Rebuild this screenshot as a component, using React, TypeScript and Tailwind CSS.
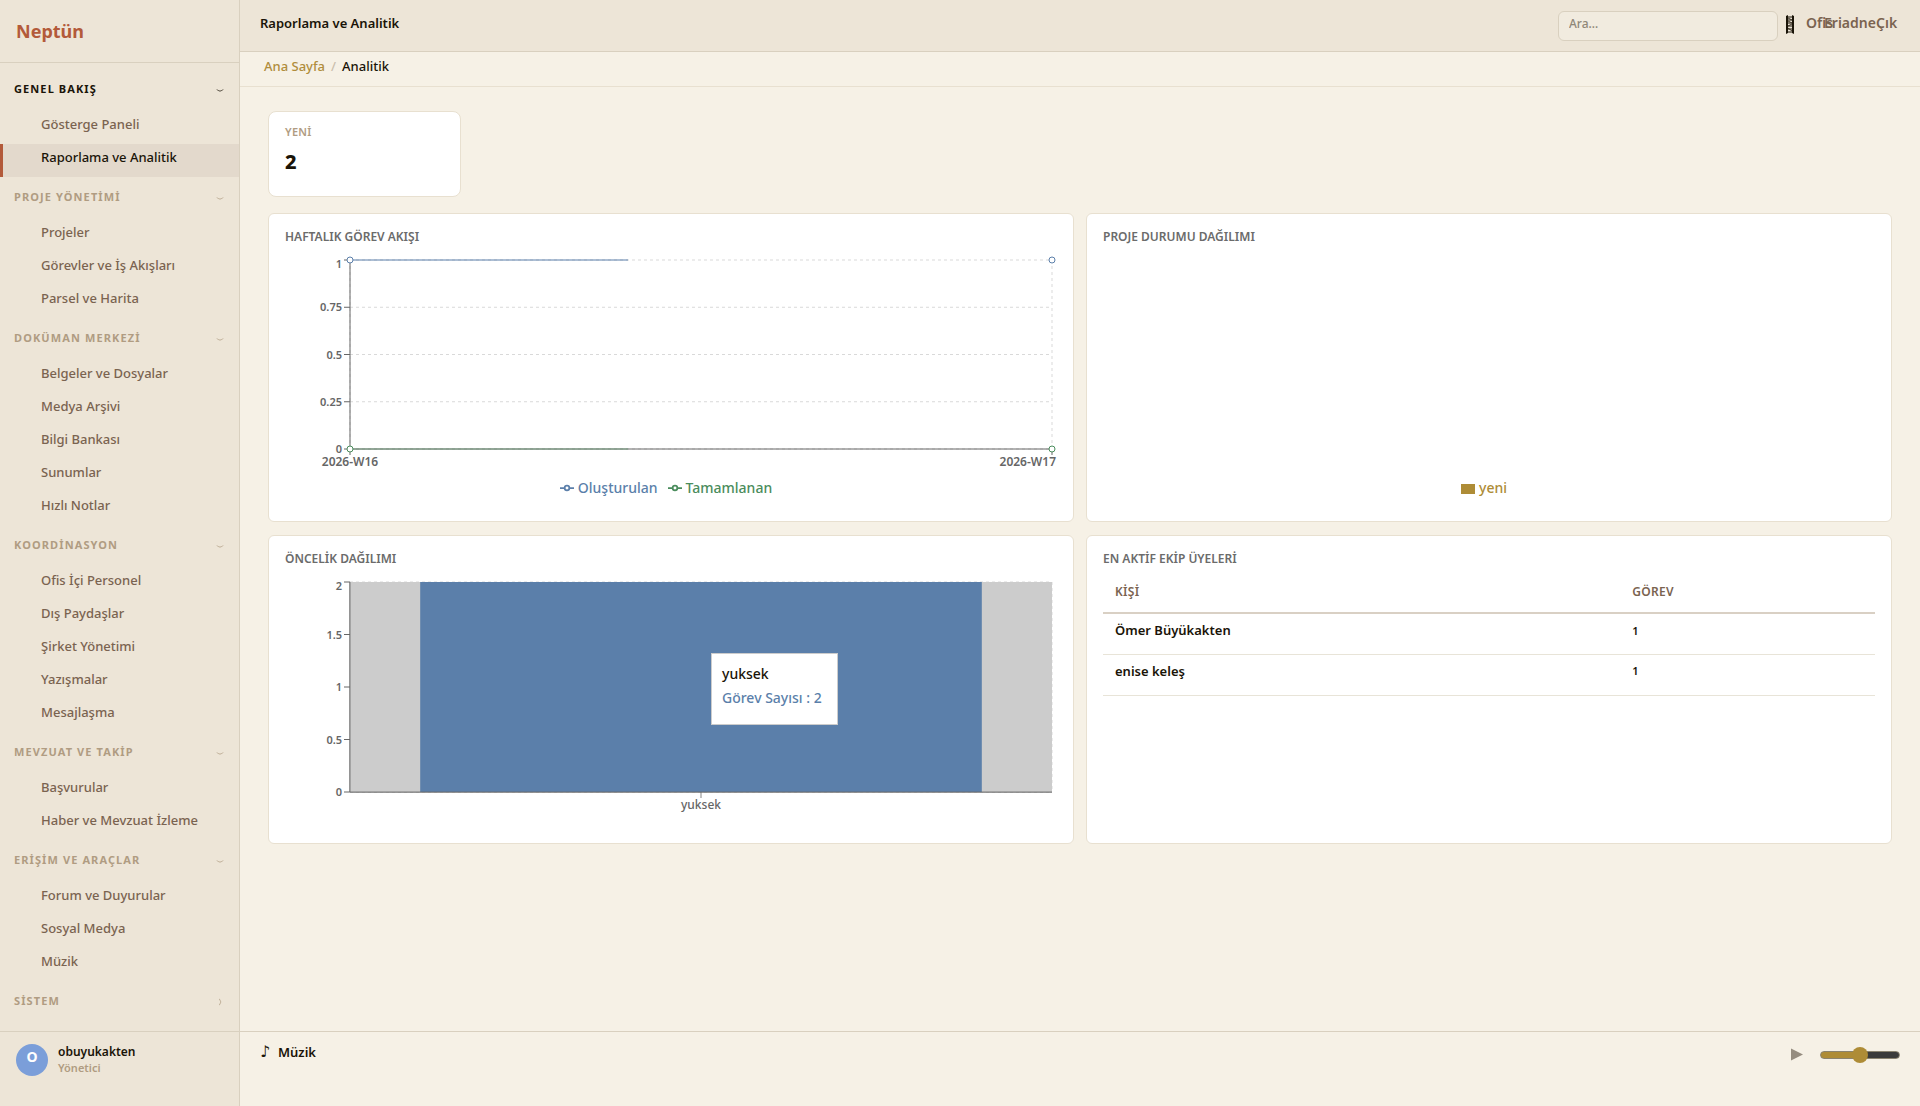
import { useLayoutEffect, useRef, useState } from 'react';
import type { ReactNode } from 'react';
import { clsx } from 'clsx';

type TGroup = { title: string; open: boolean; active?: boolean; items: string[] };

const GROUPS: TGroup[] = [
  { title: 'GENEL BAKIŞ', open: true, active: true, items: ['Gösterge Paneli', 'Raporlama ve Analitik'] },
  { title: 'PROJE YÖNETİMİ', open: true, items: ['Projeler', 'Görevler ve İş Akışları', 'Parsel ve Harita'] },
  { title: 'DOKÜMAN MERKEZİ', open: true, items: ['Belgeler ve Dosyalar', 'Medya Arşivi', 'Bilgi Bankası', 'Sunumlar', 'Hızlı Notlar'] },
  { title: 'KOORDİNASYON', open: true, items: ['Ofis İçi Personel', 'Dış Paydaşlar', 'Şirket Yönetimi', 'Yazışmalar', 'Mesajlaşma'] },
  { title: 'MEVZUAT VE TAKİP', open: true, items: ['Başvurular', 'Haber ve Mevzuat İzleme'] },
  { title: 'ERİŞİM VE ARAÇLAR', open: true, items: ['Forum ve Duyurular', 'Sosyal Medya', 'Müzik'] },
  { title: 'SİSTEM', open: false, items: [] },
];

const ACTIVE = 'Raporlama ve Analitik';

const MEMBERS = [
  { name: 'Ömer Büyükakten', count: 1 },
  { name: 'enise keleş', count: 1 },
];

// plot area inside a 250px high chart
const LEFT = 65;
const TOP = 5;

const useWidth = () => {
  const ref = useRef<HTMLDivElement>(null);
  const [width, setWidth] = useState(0);

  useLayoutEffect(() => {
    const el = ref.current;
    if (!el) return;
    setWidth(el.clientWidth);
    const ro = new ResizeObserver(() => setWidth(el.clientWidth));
    ro.observe(el);
    return () => ro.disconnect();
  }, []);

  return { ref, width };
};

const Chevron = ({ open }: { open: boolean }) => (
  <svg width="8" height="10" viewBox="0 0 8 10" fill="none" stroke="currentColor" className="opacity-80" aria-hidden="true">
    {open ? <path d="M1 5.5C1.6 6.9 3 6.2 4 7.3C5 6.2 6.4 6.9 7 5.5" /> : <path d="M3 3C4.6 3.6 3.8 5 5 6C3.8 7 4.6 8.4 3 9" />}
  </svg>
);

const Sidebar = () => (
  <aside className="flex w-60 shrink-0 flex-col border-r border-[#d9d0bf] bg-[#ede5d7]">
    <div className="flex h-[63px] items-center border-b border-[#d9d0bf] px-4 text-lg font-bold text-[#b35a3a]">Neptün</div>

    <nav className="flex-1 pt-1.5">
      {GROUPS.map((group) => (
        <div key={group.title}>
          <button
            type="button"
            aria-expanded={group.open}
            className={clsx(
              'flex h-[42px] w-full items-center justify-between pr-[15px] pb-0.5 pl-3.5 text-[11px] font-bold tracking-widest',
              group.active ? 'text-[#1a1408]' : 'text-[#b09c82]',
            )}
          >
            <span>{group.title}</span>
            <Chevron open={group.open} />
          </button>
          {group.items.map((item) => (
            <a
              key={item}
              href="#"
              className={clsx(
                'flex h-[33px] items-center border-l-3 pb-1.5 pl-[38px] text-[13px] font-medium',
                item === ACTIVE ? 'border-[#b35a3a] bg-[#e3d9cc] text-[#1a1408]' : 'border-transparent text-[#7a6350]',
              )}
            >
              {item}
            </a>
          ))}
        </div>
      ))}
    </nav>

    <div className="flex h-[75px] items-start gap-2.5 border-t border-[#d9d0bf] px-4 pt-3">
      <div className="flex size-8 items-center justify-center rounded-full bg-[#7b9ed9] pb-1.5 text-sm font-bold text-white">O</div>
      <div>
        <div className="text-xs leading-4 font-semibold text-[#1a1408]">obuyukakten</div>
        <div className="text-[11px] leading-4 font-semibold text-[#b09c82]">Yönetici</div>
      </div>
    </div>
  </aside>
);

const Topbar = () => (
  <header className="flex h-[52px] items-start justify-between border-b border-[#d9d0bf] bg-[#ede5d7] pr-6 pl-5">
    <h1 className="pt-[13px] text-[13px] leading-5 font-semibold text-[#1a1408]">{ACTIVE}</h1>

    <div className="flex items-start pt-[11px]">
      <input
        type="search"
        aria-label="Ara"
        placeholder="Ara…"
        className="h-[30px] w-[220px] rounded-md border border-[#d9d0bf] bg-[#f1ebdf] px-2.5 pb-1.5 text-xs text-[#1a1408] placeholder:font-medium placeholder:text-[#8f8778]"
      />
      <button type="button" aria-label="Tema" className="ml-2 pt-1">
        <svg width="8" height="19" viewBox="0 0 8 19" aria-hidden="true">
          <path d="M0 1L2 0V18L0 19ZM6 0L8 1V19L6 18Z" fill="#1a1408" />
          <path d="M2 2H6M2 5H6M2 8H6M2 11H6M2 14H6M2 17H6" stroke="#1a1408" />
          <path d="M2 3L6 5M2 6L6 8M6 9L2 11M2 13L6 16" stroke="#3d3528" />
        </svg>
      </button>
      {/* labels are wider than their slots and run into each other */}
      <div className="ml-3 flex pt-0.5 text-sm leading-5 font-semibold whitespace-nowrap text-[#7a6350]">
        <button type="button" className="flex w-[18px]">Ofis</button>
        <button type="button" className="flex w-[52px]">Eriadne</button>
        <button type="button" className="flex w-5">Çık</button>
      </div>
    </div>
  </header>
);

const Card = ({ title, children }: { title: string; children?: ReactNode }) => (
  <section className="flex h-[309px] flex-col rounded-md border border-[#e8e0d0] bg-white p-4">
    <h2 className="h-[26px] text-xs leading-[14px] font-semibold text-[#6b6b6b]">{title}</h2>
    {children}
  </section>
);

type TAxesProps = { width: number; height: number; ticks: string[]; vertical?: boolean };

const Axes = ({ width, height, ticks, vertical }: TAxesProps) => {
  const right = width - 5;
  const bottom = TOP + height;
  const step = height / (ticks.length - 1);

  return (
    <g>
      {ticks.map((tick, i) => (
        <g key={tick}>
          <line x1={LEFT} x2={right} y1={TOP + step * i} y2={TOP + step * i} stroke="#d9d9d9" strokeDasharray="3 3" />
          <line x1={LEFT - 6} x2={LEFT} y1={TOP + step * i} y2={TOP + step * i} stroke="#666" />
          <text x={LEFT - 8} y={TOP + step * i + (i === 0 ? 8 : 4)} textAnchor="end" fill="#666" className="text-[11px] font-semibold">
            {tick}
          </text>
        </g>
      ))}
      {vertical && <line x1={LEFT} x2={LEFT} y1={TOP} y2={bottom} stroke="#d9d9d9" strokeDasharray="3 3" />}
      <line x1={right} x2={right} y1={TOP} y2={bottom} stroke="#d9d9d9" strokeDasharray="3 3" />
      <line x1={LEFT} x2={LEFT} y1={TOP} y2={bottom} stroke="#666" />
      <line x1={LEFT} x2={right} y1={bottom} y2={bottom} stroke="#666" />
    </g>
  );
};

const LegendMark = () => (
  <svg width="14" height="14" viewBox="0 0 32 32" fill="none" stroke="currentColor" strokeWidth="4" aria-hidden="true">
    <path d="M0 16h10.667A5.333 5.333 0 1 1 21.333 16H32M21.333 16A5.333 5.333 0 1 1 10.667 16" />
  </svg>
);

const WeeklyChart = () => {
  const { ref, width } = useWidth();
  const right = width - 5;
  const drawn = LEFT + (right - LEFT) * 0.396;

  return (
    <div ref={ref} className="relative h-[250px]">
      <svg width={width} height="250" className="block">
        <Axes width={width} height={189} ticks={['1', '0.75', '0.5', '0.25', '0']} vertical />
        <path d={`M${LEFT} 194v6M${right} 194v6`} stroke="#666" />
        <line x1={LEFT} x2={drawn} y1="5" y2="5" stroke="#5b7faa" />
        <line x1={LEFT} x2={drawn} y1="194" y2="194" stroke="#4a8c5c" strokeOpacity="0.6" />
        {[LEFT, right].map((x) => (
          <g key={x} fill="#fff">
            <circle cx={x} cy="5" r="3" stroke="#5b7faa" />
            <circle cx={x} cy="194" r="3" stroke="#4a8c5c" />
          </g>
        ))}
        <g fill="#666" className="text-xs font-semibold">
          <text x={LEFT} y="211" textAnchor="middle">2026-W16</text>
          <text x={width - 1} y="211" textAnchor="end">2026-W17</text>
        </g>
      </svg>
      <ul className="absolute inset-x-0 bottom-[5px] flex justify-center text-sm leading-6 font-medium">
        <li className="mr-2.5 flex items-center gap-1 text-[#5b7faa]">
          <LegendMark />
          Oluşturulan
        </li>
        <li className="mr-2.5 flex items-center gap-1 text-[#4a8c5c]">
          <LegendMark />
          Tamamlanan
        </li>
      </ul>
    </div>
  );
};

const PriorityChart = () => {
  const { ref, width } = useWidth();
  const plot = Math.max(width - LEFT - 5, 0);
  const middle = LEFT + plot / 2;

  return (
    <div ref={ref} className="relative h-[250px]">
      <svg width={width} height="250" className="block">
        <Axes width={width} height={210} ticks={['2', '1.5', '1', '0.5', '0']} />
        <rect x={LEFT} y="5" width={plot} height="210" fill="#ccc" />
        <rect x={LEFT + plot * 0.1} y="5" width={plot * 0.8} height="210" fill="#5b7faa" />
        <path d={`M${LEFT} 5V215H${LEFT + plot}M${middle} 215v6`} fill="none" stroke="#666" strokeOpacity="0.8" />
        <text x={middle} y="232" textAnchor="middle" fill="#666" className="text-xs font-medium">
          yuksek
        </text>
      </svg>
      <div className="absolute top-[76px] left-[426px] h-[72px] w-[127px] border border-[#cccccc] bg-white px-2.5 pt-2 text-sm leading-6 font-medium whitespace-nowrap">
        <p className="text-[#1a1408]">yuksek</p>
        <p className="text-[#5b7faa]">Görev Sayısı : 2</p>
      </div>
    </div>
  );
};

const MemberTable = () => (
  <table className="w-full table-fixed text-left">
    <thead>
      <tr className="h-[35px] border-b-2 border-[#d9d0c4] text-xs text-[#7a6350]">
        <th className="w-[67%] px-3 pb-1.5 font-semibold tracking-wide">KİŞİ</th>
        <th className="px-3 pb-1.5 font-semibold tracking-wide">GÖREV</th>
      </tr>
    </thead>
    <tbody>
      {MEMBERS.map((member) => (
        <tr key={member.name} className="h-[41px] border-b border-[#e8e4d8] text-[#1a1408]">
          <td className="px-3 pb-1.5 text-[13px] font-semibold">{member.name}</td>
          <td className="px-3 pb-1.5 text-[11px] font-semibold">{member.count}</td>
        </tr>
      ))}
    </tbody>
  </table>
);

const Player = () => (
  <footer className="flex h-[75px] items-start justify-between border-t border-[#d9d0bf] px-5 pt-2.5">
    <div className="flex items-center gap-1.5 text-[13px] leading-5 font-semibold text-[#1a1408]">
      <span className="w-3 font-['DejaVu_Sans'] text-base leading-5">♪</span>
      Müzik
    </div>
    <div className="flex h-6 items-center gap-4">
      <button type="button" aria-label="Oynat" className="text-[#958c7f]">
        <svg width="14" height="14" viewBox="0 0 14 14" aria-hidden="true">
          <path d="M1 1.5L13 7.5L1 13.5Z" fill="currentColor" />
        </svg>
      </button>
      <input
        type="range"
        aria-label="Ses"
        min="0"
        max="100"
        defaultValue="50"
        className="mt-0.5 h-2 w-20 appearance-none rounded-full border border-[#8a836f] bg-linear-to-r from-[#ae8c36] from-50% to-[#3b3b3b] to-50% [&::-webkit-slider-thumb]:size-4 [&::-webkit-slider-thumb]:appearance-none [&::-webkit-slider-thumb]:rounded-full [&::-webkit-slider-thumb]:bg-[#ae8c36]"
      />
    </div>
  </footer>
);

export default function App() {
  return (
    <div className="flex min-h-screen bg-[#f6f1e6] font-['Noto_Sans',sans-serif] text-[#1a1408]">
      <Sidebar />
      <div className="flex min-w-0 flex-1 flex-col">
        <Topbar />
        <nav aria-label="Konum" className="flex h-[35px] gap-1.5 border-b border-[#e8e0d0] px-6 pt-0.5 text-[13px] leading-6 font-medium">
          <a href="#" className="text-[#b08d3c]">Ana Sayfa</a>
          <span className="text-[#cbbfad]">/</span>
          <span>Analitik</span>
        </nav>

        <main className="flex-1 px-7 py-6">
          <div className="mb-4 h-[86px] w-[193px] rounded-lg border border-[#e8e0d0] bg-white px-4 pt-3">
            <div className="text-[11px] leading-4 font-semibold tracking-wide text-[#b09c82]">YENİ</div>
            <div className="mt-1.5 text-xl leading-8 font-extrabold">2</div>
          </div>

          <div className="grid grid-cols-2 gap-x-3 gap-y-[13px]">
            <Card title="HAFTALIK GÖREV AKIŞI">
              <WeeklyChart />
            </Card>
            <Card title="PROJE DURUMU DAĞILIMI">
              <div className="flex flex-1 items-end justify-center pb-[5px] text-sm leading-6 font-medium text-[#ae8c36]">
                <span className="mr-1 mb-1.5 h-2.5 w-3.5 bg-[#ae8c36]" />
                <span className="mr-2.5">yeni</span>
              </div>
            </Card>
            <Card title="ÖNCELİK DAĞILIMI">
              <PriorityChart />
            </Card>
            <Card title="EN AKTİF EKİP ÜYELERİ">
              <MemberTable />
            </Card>
          </div>
        </main>

        <Player />
      </div>
    </div>
  );
}
